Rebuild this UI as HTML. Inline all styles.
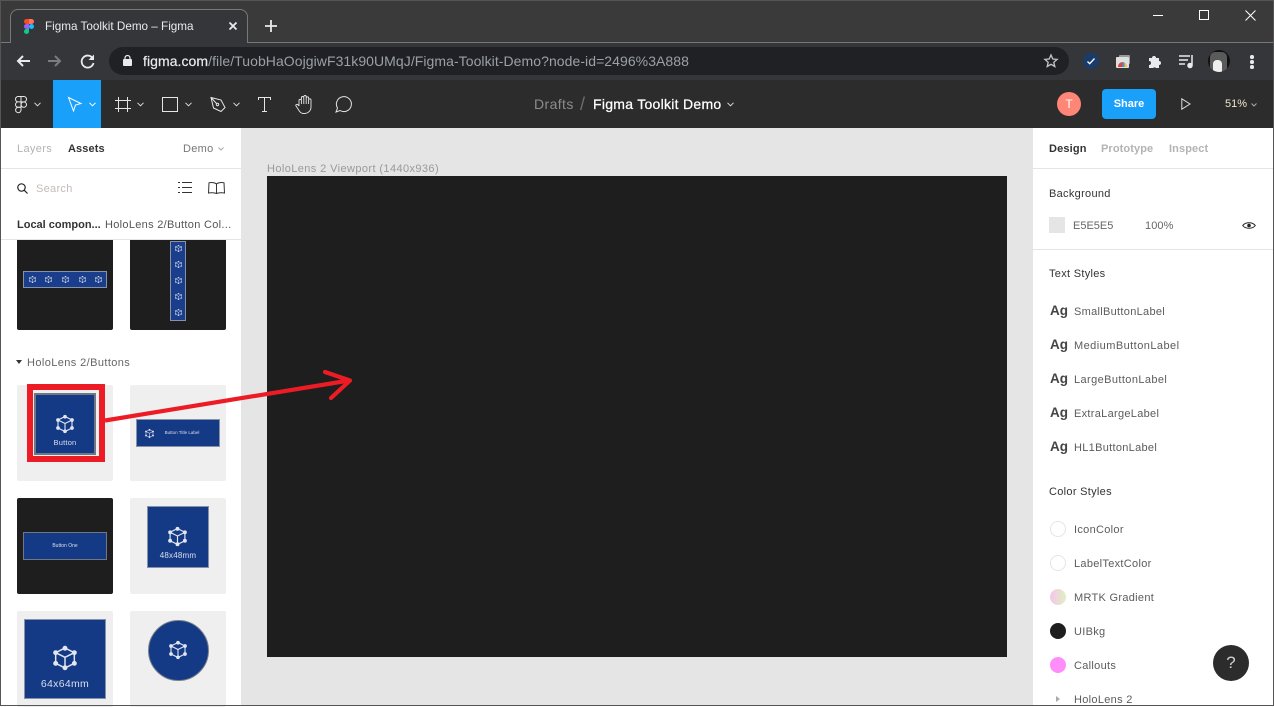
<!DOCTYPE html>
<html><head><meta charset="utf-8"><style>
html,body{margin:0;padding:0;width:1274px;height:706px;overflow:hidden;background:#fff;font-family:"Liberation Sans",sans-serif}
.a,.t{position:absolute}
.t{white-space:nowrap;font-size:11px;line-height:14px;color:#5c5c5c;letter-spacing:.3px}
.th{position:absolute;width:96px;height:96px;background:#efefef;border-radius:2px;overflow:hidden}
.d{background:#1e1e1e}
.b{position:absolute;background:#153a85;border:1px solid #8791a8;box-sizing:border-box;color:#d9dfec;text-align:center;filter:blur(.3px)}
.ag{position:absolute;left:1050px;font-size:13.5px;font-weight:bold;color:#444;line-height:14px}
.dot{position:absolute;left:1050px;width:16px;height:16px;border-radius:50%;box-sizing:border-box}
svg{position:absolute;overflow:visible}
.cb{filter:blur(.25px)}
</style></head><body>
<svg width="0" height="0" style="position:absolute"><defs>
<g id="cube" fill="none" stroke="#e2e6f0" stroke-width="1.1"><path d="M9 1.5 16 5v8l-7 3.5L2 13V5zM2 5l7 3.5L16 5M9 8.5v8"/><circle cx="9" cy="1.700" r="1.300" fill="#e2e6f0"/><circle cx="2" cy="5" r="1.300" fill="#e2e6f0"/><circle cx="16" cy="5" r="1.300" fill="#e2e6f0"/><circle cx="2" cy="13" r="1.300" fill="#e2e6f0"/><circle cx="16" cy="13" r="1.300" fill="#e2e6f0"/><circle cx="9" cy="16.300" r="1.300" fill="#e2e6f0"/></g>
</defs></svg>

<!-- Chrome title -->
<div class="a" style="left:0;top:0;width:1274px;height:43px;background:#3a3a3a"></div>
<div class="a" style="left:0;top:0;width:1274px;height:1px;background:#555"></div>
<div class="a" style="left:0;top:42px;width:1274px;height:1px;background:#787878"></div>
<div class="a" style="left:10px;top:9px;width:238px;height:34px;box-sizing:border-box;background:#35363a;border:1px solid #787878;border-bottom:0;border-radius:8px 8px 0 0"></div>
<svg style="left:24px;top:19px" width="10" height="15" viewBox="0 0 10 15"><path d="M5 0H2.500a2.500 2.500 0 0 0 0 5H5z" fill="#f24e1e"/><path d="M5 0h2.500a2.500 2.500 0 0 1 0 5H5z" fill="#ff7262"/><path d="M5 5H2.500a2.500 2.500 0 0 0 0 5H5z" fill="#a259ff"/><circle cx="7.500" cy="7.500" r="2.500" fill="#1abcfe"/><path d="M5 10H2.500A2.500 2.500 0 1 0 5 12.500z" fill="#0acf83"/></svg>
<div class="t" style="left:45px;top:20px;font-size:11.700px;color:#e8eaed;letter-spacing:0">Figma Toolkit Demo – Figma</div>
<svg style="left:229px;top:22px" width="9" height="9" fill="none" stroke="#e8eaed" stroke-width="1.800"><path d="M.5.500l7 7M7.500.500l-7 7"/></svg>
<svg style="left:265px;top:20px" width="12" height="12" fill="none" stroke="#e8eaed" stroke-width="1.800"><path d="M6 0v12M0 6h12"/></svg>
<div class="a" style="left:1153px;top:15px;width:10px;height:1px;background:#fff"></div>
<div class="a" style="left:1199px;top:10px;width:10px;height:10px;box-sizing:border-box;border:1px solid #fff"></div>
<svg style="left:1245px;top:10px" width="11" height="11" fill="none" stroke="#fff"><path d="M.5.500l10 10M10.500.500l-10 10"/></svg>

<!-- Chrome toolbar -->
<div class="a" style="left:0;top:43px;width:1274px;height:37px;background:#35363a"></div>
<svg style="left:16px;top:55px" width="14" height="12" fill="none" stroke="#e8eaed" stroke-width="2"><path d="M14 6H2M7 1 2 6l5 5"/></svg>
<svg style="left:48px;top:55px" width="14" height="12" fill="none" stroke="#7b7c7f" stroke-width="2"><path d="M0 6h12M7 1l5 5-5 5"/></svg>
<svg style="left:80px;top:54px" width="15" height="15" fill="none" stroke="#e8eaed" stroke-width="1.800"><path d="M12.500 4A6 6 0 1 0 13.500 9"/><path d="M14 0.500v5.500H8.500z" fill="#e8eaed" stroke="none"/></svg>
<div class="a" style="left:109px;top:47px;width:960px;height:28px;background:#202124;border-radius:14px"></div>
<svg style="left:123px;top:55px" width="9" height="11"><rect y="4" width="9" height="7" rx="1" fill="#e8eaed"/><path d="M2 5V3a2.500 2.500 0 0 1 5 0v2" fill="none" stroke="#e8eaed" stroke-width="1.200"/></svg>
<div class="t" style="left:143px;top:53px;font-size:14px;line-height:16px;color:#9aa0a6;letter-spacing:.06px"><span style="color:#e8eaed;-webkit-text-stroke:.2px #e8eaed">figma.com</span>/file/TuobHaOojgiwF31k90UMqJ/Figma-Toolkit-Demo?node-id=2496%3A888</div>
<svg style="left:1044px;top:54px" width="14" height="14" fill="none" stroke="#c4c7c5" stroke-width="1.300"><path d="M7 1l1.800 4 4.300.4-3.300 2.900 1 4.200L7 10.300 3.200 12.500l1-4.200L.9 5.400 5.200 5z"/></svg>
<div class="a" style="left:1083px;top:53px;width:16px;height:16px;border-radius:50%;background:#1a3c6b"></div>
<svg style="left:1087px;top:58px" width="8" height="7" fill="none" stroke="#fff" stroke-width="1.300"><path d="M.5 3.500l2.200 2.200L7.500.5"/></svg>
<div class="a" style="left:1119px;top:55px;width:11px;height:9px;background:#9a9a9a;border-radius:1px"></div>
<div class="a" style="left:1116px;top:57px;width:13px;height:11px;background:#e0e0e0;border-radius:1px"></div>
<div class="a" style="left:1118px;top:62px;width:9px;height:5px;border-radius:5px 5px 0 0;background:linear-gradient(90deg,#d9483b 0 50%,#4a8fe8 50% 75%,#f0c030 75%)"></div>
<svg style="left:1148px;top:54px" width="15" height="15"><path d="M1 4h3a2 2 0 0 1 4 0h3v3a2 2 0 0 1 0 4v3H8a2 2 0 0 0-3 0H1v-3a2 2 0 0 0 0-4z" fill="#e8eaed"/></svg>
<svg style="left:1179px;top:54px" width="16" height="14" fill="none" stroke="#e8eaed" stroke-width="1.500"><path d="M0 2h11M0 6h9M0 10h6M13 1v10"/><circle cx="11" cy="11.500" r="2" fill="#e8eaed"/></svg>
<div class="a" style="left:1208px;top:50px;width:22px;height:22px;border-radius:50%;background:#111;overflow:hidden"><div class="a" style="left:2px;top:2px;width:17px;height:20px;background:#5a5a5a;border-radius:5px 5px 0 0"></div><div class="a" style="left:5px;top:10px;width:9px;height:12px;background:#eee;border-radius:4px 4px 0 0"></div></div>
<div class="a" style="left:1250px;top:55px;width:3.500px;height:3.500px;border-radius:50%;background:#e8eaed;box-shadow:0 5px #e8eaed,0 10px #e8eaed"></div>

<!-- Figma toolbar -->
<div class="a" style="left:0;top:80px;width:1274px;height:48px;background:#2c2c2c"></div>
<div class="a" style="left:53px;top:80px;width:48px;height:48px;background:#18a0fb"></div>
<svg style="left:15px;top:96px" width="12" height="17" fill="none" stroke="#e6e6e6"><path d="M6 .5H3.200a2.700 2.700 0 0 0 0 5.400H6zM6 .5h2.800a2.700 2.700 0 0 1 0 5.400H6zM6 5.900H3.200a2.700 2.700 0 0 0 0 5.400H6z"/><circle cx="8.800" cy="8.600" r="2.700"/><path d="M6 11.300H3.200A2.700 2.700 0 1 0 6 14z"/></svg>
<svg style="left:34px;top:102px" width="7" height="5" fill="none" stroke="#ddd"><path d="M.5.800 3.500 3.800 6.500.8"/></svg>
<svg style="left:68px;top:97px" width="14" height="15" fill="none" stroke="#fff"><path d="M.5.500 13 6.500 7.500 8 5.500 14z"/></svg>
<svg style="left:89px;top:102px" width="7" height="5" fill="none" stroke="#fff"><path d="M.5.800 3.500 3.800 6.500.8"/></svg>
<svg style="left:115px;top:97px" width="16" height="16" fill="none" stroke="#e6e6e6"><path d="M3.500 0v15M12.500 0v15M0 3.500h16M0 11.500h16"/></svg>
<svg style="left:137px;top:102px" width="7" height="5" fill="none" stroke="#ddd"><path d="M.5.800 3.500 3.800 6.500.8"/></svg>
<div class="a" style="left:162px;top:97px;width:16px;height:15px;box-sizing:border-box;border:1px solid #e6e6e6"></div>
<svg style="left:185px;top:102px" width="7" height="5" fill="none" stroke="#ddd"><path d="M.5.800 3.500 3.800 6.500.8"/></svg>
<svg style="left:210px;top:97px" width="16" height="15" fill="none" stroke="#e6e6e6"><path d="M1 .5 11 3 15 10.500 11 14.500 3.500 11zM1 .5l5.500 6"/><circle cx="7.500" cy="7.500" r="1.200"/></svg>
<svg style="left:233px;top:102px" width="7" height="5" fill="none" stroke="#ddd"><path d="M.5.800 3.500 3.800 6.500.8"/></svg>
<svg style="left:258px;top:97px" width="14" height="15" fill="none" stroke="#e6e6e6"><path d="M.5 3V.5h12V3M6.500 .5v14M4 14.500h5"/></svg>
<svg style="left:295px;top:95px" width="19" height="19" fill="none" stroke="#e6e6e6" stroke-width=".9" stroke-linejoin="round"><path d="M4 11V5.500a1.200 1.200 0 0 1 2.400 0V9M6.400 9V2.700a1.200 1.200 0 0 1 2.400 0V9M8.800 9V1.700a1.200 1.200 0 0 1 2.400 0V9M11.200 9V3a1.200 1.200 0 0 1 2.400 0V9M13.600 9V5a1.200 1.200 0 0 1 2.400 0v7a6.500 6.500 0 0 1-6.500 6.500h-1c-2 0-3.200-1-4.200-2.500L1 11c-.7-1.200 1-2.300 2-1.200l1 1.200"/></svg>
<svg style="left:335px;top:96px" width="18" height="17" fill="none" stroke="#e6e6e6"><path d="M1 16l1.500-4A7.500 7.500 0 1 1 5 14.500z"/></svg>
<div class="t" style="left:534px;top:96px;font-size:14px;line-height:16px;color:#8c8c8c;letter-spacing:.4px">Drafts</div>
<div class="t" style="left:580px;top:94px;font-size:18px;line-height:20px;color:#6e6e6e;letter-spacing:0">/</div>
<div class="t" style="left:593px;top:96px;font-size:14px;line-height:16px;color:#fff;letter-spacing:.28px;-webkit-text-stroke:.25px #fff">Figma Toolkit Demo</div>
<svg style="left:727px;top:102px" width="7" height="5" fill="none" stroke="#ddd"><path d="M.5.800 3.500 3.800 6.500.8"/></svg>
<div class="a" style="left:1057px;top:92px;width:24px;height:24px;border-radius:50%;background:#ff8577;color:#fff;font-size:12px;line-height:24px;text-align:center">T</div>
<div class="a" style="left:1102px;top:89px;width:54px;height:30px;border-radius:4px;background:#18a0fb;color:#fff;font-size:11px;font-weight:bold;line-height:30px;text-align:center">Share</div>
<svg style="left:1181px;top:98px" width="10" height="12" fill="none" stroke="#ddd"><path d="M.8.800 9 6 .8 11.200z"/></svg>
<div class="t" style="left:1225px;top:97px;color:#f0e6c8;letter-spacing:0">51%</div>
<svg style="left:1251px;top:103px" width="6" height="4" fill="none" stroke="#aaa"><path d="M.5.500 3 3 5.500.500"/></svg>

<!-- Canvas -->
<div class="a" style="left:241px;top:128px;width:792px;height:578px;background:#e5e5e5"></div>
<div class="t" style="left:267px;top:162px;color:#9a9a9a;letter-spacing:.4px">HoloLens 2 Viewport (1440x936)</div>
<div class="a" style="left:267px;top:176px;width:740px;height:481px;background:#1e1e1e"></div>

<!-- Left panel -->
<div class="a" style="left:1px;top:128px;width:240px;height:578px;background:#fff"></div>
<div class="a" style="left:1px;top:168px;width:240px;height:1px;background:#e5e5e5"></div>
<div class="a" style="left:1px;top:239px;width:240px;height:1px;background:#e5e5e5"></div>
<div class="t" style="left:17px;top:142px;color:#b3b3b3;letter-spacing:.35px">Layers</div>
<div class="t" style="left:68px;top:142px;color:#333;font-weight:bold;letter-spacing:.1px">Assets</div>
<div class="t" style="left:183px;top:142px;color:#777">Demo</div>
<svg style="left:218px;top:147px" width="6" height="4" fill="none" stroke="#aaa"><path d="M.5.500 3 3 5.500.500"/></svg>
<svg style="left:17px;top:183px" width="11" height="11" fill="none" stroke="#222" stroke-width="1.200"><circle cx="4.500" cy="4.500" r="3.700"/><path d="M7.300 7.300 10.500 10.500"/></svg>
<div class="t" style="left:36px;top:182px;color:#c4bdb8">Search</div>
<svg style="left:178px;top:182px" width="14" height="12" stroke="#333"><path d="M0 .5h2M0 5.500h2M0 10.500h2M4 .5h10M4 5.500h10M4 10.500h10"/></svg>
<svg style="left:208px;top:182px" width="17" height="12" fill="none" stroke="#333"><path d="M8.500 2C7 .5 3 .3 1 .8L.5 11c2-.5 6-.3 8 .5 2-.8 6-1 8-.5L16 .8C14 .3 10 .5 8.500 2zM8.500 2v9"/></svg>
<div class="t" style="left:17px;top:218px;color:#333;font-weight:bold;letter-spacing:0">Local compon...</div>
<div class="t" style="left:105px;top:218px;color:#555">HoloLens 2/Button Col...</div>

<div class="a" style="left:1px;top:240px;width:240px;height:90px;overflow:hidden">
 <div class="th d" style="left:16px;top:-6px"><div class="b" style="left:6px;top:37px;width:84px;height:17px;background:#1a3d8c"></div>
  <svg class="cb" style="left:12px;top:42px" width="7" height="7" viewBox="0 0 18 18"><use href="#cube"/></svg>
  <svg class="cb" style="left:28px;top:42px" width="7" height="7" viewBox="0 0 18 18"><use href="#cube"/></svg>
  <svg class="cb" style="left:45px;top:42px" width="7" height="7" viewBox="0 0 18 18"><use href="#cube"/></svg>
  <svg class="cb" style="left:62px;top:42px" width="7" height="7" viewBox="0 0 18 18"><use href="#cube"/></svg>
  <svg class="cb" style="left:78px;top:42px" width="7" height="7" viewBox="0 0 18 18"><use href="#cube"/></svg>
 </div>
 <div class="th d" style="left:129px;top:-6px"><div class="b" style="left:40px;top:7px;width:16px;height:80px;background:#1a3d8c"></div>
  <svg class="cb" style="left:45px;top:11px" width="7" height="7" viewBox="0 0 18 18"><use href="#cube"/></svg>
  <svg class="cb" style="left:45px;top:27px" width="7" height="7" viewBox="0 0 18 18"><use href="#cube"/></svg>
  <svg class="cb" style="left:45px;top:43px" width="7" height="7" viewBox="0 0 18 18"><use href="#cube"/></svg>
  <svg class="cb" style="left:45px;top:59px" width="7" height="7" viewBox="0 0 18 18"><use href="#cube"/></svg>
  <svg class="cb" style="left:45px;top:75px" width="7" height="7" viewBox="0 0 18 18"><use href="#cube"/></svg>
 </div>
</div>
<svg style="left:16px;top:360px" width="6" height="4"><path d="M0 0h6L3 4z" fill="#333"/></svg>
<div class="t" style="left:27px;top:356px;color:#666;letter-spacing:.4px">HoloLens 2/Buttons</div>

<div class="th" style="left:17px;top:385px"></div>
<div class="b" style="left:34px;top:393px;width:62px;height:62px;border:2px solid #6f7684;font-size:7.500px;line-height:9px;padding-top:43px;letter-spacing:.2px">Button</div>
<svg class="cb" style="left:56px;top:415px" width="18" height="18"><use href="#cube"/></svg>

<div class="th" style="left:130px;top:385px"><div class="b" style="left:6px;top:34px;width:84px;height:28px;font-size:4.500px;line-height:26px;padding-left:8px">Button Title Label</div><svg class="cb" style="left:15px;top:44px" width="9" height="9" viewBox="0 0 18 18"><use href="#cube"/></svg></div>

<div class="th d" style="left:17px;top:498px"><div class="b" style="left:6px;top:34px;width:84px;height:28px;font-size:5px;line-height:26px;border-color:#6f7684">Button One</div></div>
<div class="th" style="left:130px;top:498px"><div class="b" style="left:17px;top:8px;width:62px;height:62px;font-size:8px;line-height:10px;padding-top:44px;letter-spacing:.2px">48x48mm</div><svg class="cb" style="left:38px;top:29px" width="19" height="19" viewBox="0 0 18 18"><use href="#cube"/></svg></div>

<div class="th" style="left:17px;top:611px"><div class="b" style="left:7px;top:8px;width:82px;height:80px;font-size:10.500px;line-height:12px;padding-top:58px;letter-spacing:.3px">64x64mm</div><svg class="cb" style="left:36px;top:35px" width="24" height="24" viewBox="0 0 18 18"><use href="#cube"/></svg></div>
<div class="th" style="left:130px;top:611px"><div class="b" style="left:18px;top:9px;width:61px;height:61px;border-radius:50%;border:1px solid #7a7f8c"></div><svg class="cb" style="left:39px;top:30px" width="18" height="18"><use href="#cube"/></svg></div>

<!-- Red annotation -->
<div class="a" style="left:27px;top:384px;width:78px;height:78px;box-sizing:border-box;border:6.500px solid #ed1c24"></div>
<svg style="left:0;top:0" width="1274" height="706" fill="none" stroke="#ed1c24" stroke-width="4.200"><path d="M105 420.500 349 380.500"/><path d="M325 372 350 380.500 331 398" stroke-linecap="round" stroke-linejoin="round"/></svg>

<!-- Right panel -->
<div class="a" style="left:1033px;top:128px;width:240px;height:578px;background:#fff"></div>
<div class="a" style="left:1033px;top:168px;width:240px;height:1px;background:#e5e5e5"></div>
<div class="a" style="left:1033px;top:249px;width:240px;height:1px;background:#e5e5e5"></div>
<div class="t" style="left:1049px;top:142px;color:#333;font-weight:bold;letter-spacing:.15px">Design</div>
<div class="t" style="left:1101px;top:142px;color:#b3b3b3;font-weight:bold;letter-spacing:.1px">Prototype</div>
<div class="t" style="left:1169px;top:142px;color:#b3b3b3;font-weight:bold;letter-spacing:.1px">Inspect</div>
<div class="t" style="left:1049px;top:187px;color:#333;letter-spacing:.3px">Background</div>
<div class="a" style="left:1049px;top:217px;width:16px;height:16px;background:#e5e5e5"></div>
<div class="t" style="left:1073px;top:219px;color:#666;letter-spacing:0">E5E5E5</div>
<div class="t" style="left:1145px;top:219px;color:#666;letter-spacing:.1px">100%</div>
<svg style="left:1242px;top:221px" width="14" height="9" fill="none" stroke="#222"><path d="M.7 4.500C3.500.8 10.500.8 13.300 4.500 10.500 8.200 3.500 8.200.7 4.500z"/><circle cx="7" cy="4.500" r="1.800" fill="#222" stroke="none"/></svg>
<div class="t" style="left:1049px;top:267px;color:#333;letter-spacing:.3px">Text Styles</div>
<div class="ag" style="top:304px">Ag</div><div class="t" style="left:1074px;top:305px">SmallButtonLabel</div>
<div class="ag" style="top:338px">Ag</div><div class="t" style="left:1074px;top:339px;letter-spacing:.45px">MediumButtonLabel</div>
<div class="ag" style="top:372px">Ag</div><div class="t" style="left:1074px;top:373px;letter-spacing:.4px">LargeButtonLabel</div>
<div class="ag" style="top:406px">Ag</div><div class="t" style="left:1074px;top:407px">ExtraLargeLabel</div>
<div class="ag" style="top:440px">Ag</div><div class="t" style="left:1074px;top:441px">HL1ButtonLabel</div>
<div class="t" style="left:1049px;top:485px;color:#333;letter-spacing:.3px">Color Styles</div>
<div class="dot" style="top:521px;background:#fff;border:1px solid #e5e5e5"></div><div class="t" style="left:1074px;top:523px">IconColor</div>
<div class="dot" style="top:555px;background:#fff;border:1px solid #e5e5e5"></div><div class="t" style="left:1074px;top:557px">LabelTextColor</div>
<div class="dot" style="top:589px;background:linear-gradient(90deg,#f5c6ec,#dff0c0)"></div><div class="t" style="left:1074px;top:591px">MRTK Gradient</div>
<div class="dot" style="top:623px;background:#1e1e1e"></div><div class="t" style="left:1074px;top:625px">UIBkg</div>
<div class="dot" style="top:657px;background:#ff8dfa"></div><div class="t" style="left:1074px;top:659px">Callouts</div>
<svg style="left:1056px;top:696px" width="4" height="6"><path d="M0 0v6l4-3z" fill="#aaa"/></svg>
<div class="t" style="left:1074px;top:693px">HoloLens 2</div>
<div class="a" style="left:1213px;top:645px;width:36px;height:36px;border-radius:50%;background:#2c2c2c;color:#d0d0d0;font-size:17px;line-height:36px;text-align:center">?</div>

<!-- Window edges -->
<div class="a" style="left:0;top:0;width:1px;height:706px;background:#555"></div>
<div class="a" style="left:1273px;top:0;width:1px;height:706px;background:#555"></div>
<div class="a" style="left:0;top:705px;width:1274px;height:1px;background:#555"></div>
</body></html>
